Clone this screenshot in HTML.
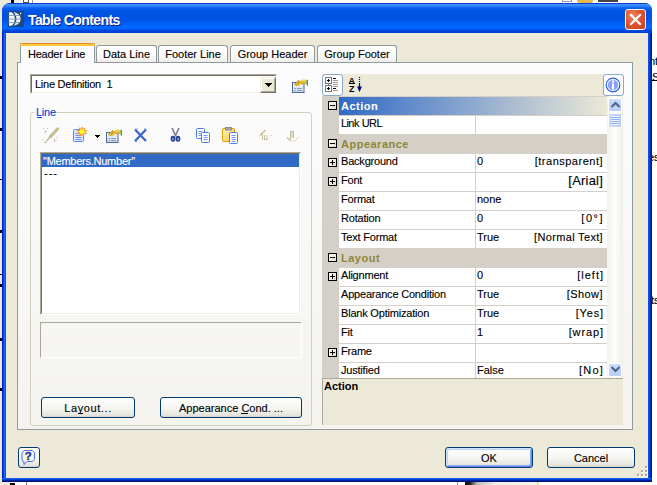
<!DOCTYPE html>
<html><head><meta charset="utf-8">
<style>
*{box-sizing:border-box}
html,body{margin:0;padding:0}
body{width:657px;height:485px;position:relative;overflow:hidden;background:#fff;font-family:"Liberation Sans",sans-serif;font-size:11px;color:#000;letter-spacing:-0.25px;-webkit-text-stroke:0.12px currentColor}
.a{position:absolute}
.t{position:absolute;white-space:pre;line-height:13px}
/* window */
#win{left:2px;top:3px;width:650px;height:479px;background:#0845e8;border-radius:8px 7px 0 0;overflow:hidden}
#frameL{left:0;top:0;width:4px;height:479px;background:linear-gradient(90deg,#0020d8 0,#0020d8 1px,#0040e8 1px,#0040e8 2px,#1c6cf8 2px,#1c6cf8 3px,#0855e0 3px)}
#frameR{right:0;top:0;width:4px;height:479px;background:linear-gradient(90deg,#0a4ef0 0,#0a4ef0 1px,#0845d8 1px,#0845d8 2px,#0028a8 2px,#0028a8 3px,#001e90 3px)}
#frameB{left:0;bottom:0;width:650px;height:4px;background:linear-gradient(180deg,#1060f0 0,#1060f0 1px,#0040d0 1px,#0040d0 2px,#0020a0 2px,#0020a0 3px,#001080 3px)}
#title{left:0;top:0;width:650px;height:30px;border-radius:8px 7px 0 0;background:linear-gradient(180deg,#0a3edc 0px,#0a3edc 1px,#3d95ff 1px,#3585ff 3px,#0a60f2 5px,#0054e3 8px,#0052e2 16px,#005ef5 20px,#0066ff 23px,#0066ff 26px,#0048dd 27px,#003dd7 30px)}
#client{left:4px;top:30px;width:642px;height:445px;background:#ece9d8}
.ttl{left:28px;top:14px;color:#fff;font-weight:bold;font-size:14px;letter-spacing:-0.6px;-webkit-text-stroke:0;text-shadow:1px 1px #0a1e8c}
/* tabs */
.tabi{position:absolute;top:45px;height:18px;border:1px solid #919b9c;border-bottom:none;border-radius:3px 3px 0 0;background:linear-gradient(180deg,#fff,#fefefe 40%,#ecebe6)}
.tabi span{position:absolute;left:0;right:0;top:2px;letter-spacing:0;text-align:center;white-space:pre;line-height:13px}
#panel{left:17px;top:62px;width:616px;height:368px;border:1px solid #919b9c;background:linear-gradient(180deg,#fcfcfe,#f4f3ee)}
.btn{position:absolute;border:1px solid #003c74;border-radius:3px;background:linear-gradient(180deg,#fff,#f3f3ef 60%,#e6e5dd 90%,#d6d0c5)}
.btn span{position:absolute;left:0;right:0;top:4px;letter-spacing:0;text-align:center;white-space:pre;line-height:13px}
/* grid */
.row{position:absolute;left:339px;width:268px;height:19px;border-top:1px solid #d4d0c8;background:#fff}
.cat{position:absolute;left:322px;width:285px;height:19px;background:#d4d0c8}
.nm{position:absolute;left:341px;white-space:pre;line-height:13px;letter-spacing:-0.2px}
.vl{position:absolute;left:477px;white-space:pre;line-height:13px;letter-spacing:0}
.vr{position:absolute;right:54px;white-space:pre;line-height:13px;letter-spacing:0.2px}
.catt{position:absolute;left:341px;white-space:pre;line-height:13px;font-weight:bold;color:#8f8737;letter-spacing:0.5px;-webkit-text-stroke:0}
.box{position:absolute;left:328px;width:9px;height:9px;border:1px solid #000;background:linear-gradient(135deg,#fff,#dcd9d0)}
.box:before{content:"";position:absolute;left:1px;top:3px;width:5px;height:1px;background:#000}
.box.p:after{content:"";position:absolute;left:3px;top:1px;width:1px;height:5px;background:#000}
</style></head>
<body>
<!-- background fragments -->
<div class="a" style="left:0;top:0;width:2px;height:485px;background:#ece9d8"></div>
<div class="a" style="left:0;top:0;width:11px;height:14px;background:#ece9d8"></div>
<div class="a" style="left:11px;top:0;width:3px;height:3px;background:#000"></div>
<div class="a" style="left:14px;top:0;width:8px;height:3px;background:#eeeeee"></div>
<div class="a" style="left:0;top:482px;width:9px;height:3px;background:#ece9d8"></div>
<div class="a" style="left:9px;top:483px;width:6px;height:2px;background:#000"></div>

<div id="win" class="a">
 <div id="title" class="a"></div>
 <div id="frameL" class="a" style="top:30px;height:449px"></div>
 <div id="frameR" class="a" style="top:30px;height:449px"></div>
 <div id="frameB" class="a"></div>
 <div id="client" class="a"></div>
</div>

<!-- title -->
<div class="t ttl">Table Contents</div>


<!-- title icon -->
<svg class="a" style="left:8px;top:11px" width="16" height="16" viewBox="0 0 16 16">
 <rect width="16" height="16" fill="#1c4a80"/>
 <path d="M1 1.2H3.5C5.8 2.5 6.8 5 6.8 8C6.8 11 5.8 13.5 3.5 14.8H1Z" fill="#f4f7fb"/>
 <path d="M5.6 1.3C9.8 2 12.6 4.6 12.6 8C12.6 11.4 9.8 14 5.6 14.7C7.6 13 8.4 10.6 8.4 8C8.4 5.4 7.6 3 5.6 1.3Z" fill="#eef3f8"/>
 <path d="M0.5 4.5H12M0.5 8H13M0.5 11.5H12" stroke="#7f97b3" stroke-width="0.9"/>
 <circle cx="12.6" cy="2.6" r="0.8" fill="#fff"/>
</svg>
<!-- close button -->
<div class="a" style="left:625px;top:9px;width:21px;height:21px;border:1px solid #fff;border-radius:3px;background:radial-gradient(circle at 35% 30%,#f08a6a 0,#e0532f 45%,#c8401e 100%)"></div>
<svg class="a" style="left:625px;top:9px" width="21" height="21" viewBox="0 0 21 21"><path d="M6 6L15 15M15 6L6 15" stroke="#fff" stroke-width="2.2" stroke-linecap="square"/></svg>

<!-- tabs -->
<div class="tabi" style="left:96px;width:61px"><span>Data Line</span></div>
<div class="tabi" style="left:158px;width:70px"><span>Footer Line</span></div>
<div class="tabi" style="left:230px;width:85px"><span>Group Header</span></div>
<div class="tabi" style="left:317px;width:80px"><span>Group Footer</span></div>
<div id="panel" class="a"></div>
<div class="a" style="left:20px;top:43px;width:75px;height:20px;border:1px solid #919b9c;border-top:none;border-bottom:none;background:#fcfcfe"></div>
<div class="a" style="left:20px;top:43px;width:75px;height:3px;border-radius:3px 3px 0 0;background:linear-gradient(180deg,#e68b2c 0,#e68b2c 33%,#ffc73c 34%)"></div>
<div class="t" style="left:28px;top:48px">Header Line</div>

<!-- combo -->
<div class="a" style="left:30px;top:74px;width:247px;height:20px;border-top:1px solid #aca899;border-left:1px solid #aca899;border-right:1px solid #fff;border-bottom:1px solid #fff;background:#fff"></div>
<div class="a" style="left:31px;top:75px;width:245px;height:18px;border-top:1px solid #716f64;border-left:1px solid #716f64;border-right:1px solid #f1efe2;border-bottom:1px solid #f1efe2"></div>
<div class="a" style="left:260px;top:77px;width:16px;height:16px;background:#ece9d8;border-top:1px solid #f1efe2;border-left:1px solid #f1efe2;border-right:1px solid #716f64;border-bottom:1px solid #716f64"></div>
<div class="a" style="left:261px;top:78px;width:14px;height:14px;border-top:1px solid #fff;border-left:1px solid #fff;border-right:1px solid #aca899;border-bottom:1px solid #aca899"></div>
<svg class="a" style="left:265px;top:83px" width="7" height="4" viewBox="0 0 7 4" shape-rendering="crispEdges"><path d="M0 0h7v1h-1v1h-1v1h-1v1h-1v-1h-1v-1h-1v-1h-1z" fill="#000"/></svg>
<div class="t" style="left:35px;top:78px">Line Definition  1</div>

<!-- group box -->
<div class="a" style="left:30px;top:112px;width:282px;height:314px;border:1px solid #d0d0bf;border-radius:3px"></div>
<div class="a" style="left:34px;top:108px;width:22px;height:10px;background:#fafaf8"></div>
<div class="t" style="left:36px;top:106px;color:#0046d5">Line</div>
<div class="a" style="left:37px;top:117px;width:5px;height:1px;background:#0046d5"></div>

<!-- listbox -->
<div class="a" style="left:40px;top:152px;width:261px;height:163px;border-top:1px solid #aca899;border-left:1px solid #aca899;border-right:1px solid #fff;border-bottom:1px solid #fff;background:#fff"></div>
<div class="a" style="left:41px;top:153px;width:259px;height:161px;border-top:1px solid #716f64;border-left:1px solid #716f64;border-right:1px solid #f1efe2;border-bottom:1px solid #f1efe2"></div>
<div class="a" style="left:42px;top:154px;width:257px;height:13px;background:#316ac5"></div>
<div class="t" style="left:43px;top:155px;color:#fff">"Members.Number"</div>
<div class="t" style="left:44px;top:167px;letter-spacing:1px">---</div>

<!-- static box -->
<div class="a" style="left:40px;top:322px;width:262px;height:36px;border-top:1px solid #aca899;border-left:1px solid #aca899;border-right:1px solid #fff;border-bottom:1px solid #fff"></div>

<!-- buttons -->
<div class="btn" style="left:41px;top:397px;width:94px;height:21px"><span style="letter-spacing:0.6px">La<u style="text-decoration:none;position:relative">y<i style="position:absolute;left:0;right:1px;top:11px;height:1px;background:#000"></i></u>out...</span></div>
<div class="btn" style="left:160px;top:397px;width:142px;height:21px"><span>Appearance <u style="text-decoration:none;position:relative">C<i style="position:absolute;left:0;right:1px;top:11px;height:1px;background:#000"></i></u>ond. ...</span></div>
<div class="btn" style="left:445px;top:447px;width:88px;height:21px;box-shadow:inset 1px 1px #cee7ff,inset -1px -1px #6982ee,inset 2px 2px #bcd4f6,inset -2px -2px #89adf4"><span>OK</span></div>
<div class="btn" style="left:547px;top:447px;width:88px;height:21px"><span>Cancel</span></div>
<div class="btn" style="left:18px;top:447px;width:22px;height:21px"></div>
<!-- property grid -->
<div class="a" style="left:322px;top:74px;width:301px;height:22px;background:#ece9d8"></div>
<div class="a" style="left:322px;top:96px;width:285px;height:282px;background:#d4d0c8;overflow:hidden">
</div>
<div class="a" style="left:339px;top:97px;width:268px;height:18px;background:linear-gradient(90deg,#316ac5,#ece9d8)"></div>
<div class="catt" style="top:100px;color:#fff">Action</div>
<div class="box m" style="top:101px"></div>
<div class="a" style="left:339px;top:116px;width:268px;height:18px;background:#fff"></div>
<div class="a" style="left:475px;top:116px;width:1px;height:18px;background:#d4d0c8"></div>
<div class="nm" style="top:117px;letter-spacing:-0.6px;word-spacing:0.5px">Link URL</div>
<div class="catt" style="top:138px">Appearance</div>
<div class="box m" style="top:139px"></div>
<div class="a" style="left:339px;top:154px;width:268px;height:18px;background:#fff"></div>
<div class="a" style="left:475px;top:154px;width:1px;height:18px;background:#d4d0c8"></div>
<div class="nm" style="top:155px">Background</div>
<div class="vl" style="top:155px">0</div>
<div class="vr" style="top:155px;letter-spacing:0.5px;right:54px">[transparent]</div>
<div class="box p" style="top:158px"></div>
<div class="a" style="left:339px;top:173px;width:268px;height:18px;background:#fff"></div>
<div class="a" style="left:475px;top:173px;width:1px;height:18px;background:#d4d0c8"></div>
<div class="nm" style="top:174px">Font</div>
<div class="vr" style="top:174px;font-size:13px;">[Arial]</div>
<div class="box p" style="top:177px"></div>
<div class="a" style="left:339px;top:192px;width:268px;height:18px;background:#fff"></div>
<div class="a" style="left:475px;top:192px;width:1px;height:18px;background:#d4d0c8"></div>
<div class="nm" style="top:193px">Format</div>
<div class="vl" style="top:193px">none</div>
<div class="a" style="left:339px;top:211px;width:268px;height:18px;background:#fff"></div>
<div class="a" style="left:475px;top:211px;width:1px;height:18px;background:#d4d0c8"></div>
<div class="nm" style="top:212px">Rotation</div>
<div class="vl" style="top:212px">0</div>
<div class="vr" style="top:212px;letter-spacing:1.5px;right:53px">[0°]</div>
<div class="a" style="left:339px;top:230px;width:268px;height:18px;background:#fff"></div>
<div class="a" style="left:475px;top:230px;width:1px;height:18px;background:#d4d0c8"></div>
<div class="nm" style="top:231px">Text Format</div>
<div class="vl" style="top:231px">True</div>
<div class="vr" style="top:231px;letter-spacing:0.33px;right:54px">[Normal Text]</div>
<div class="catt" style="top:252px">Layout</div>
<div class="box m" style="top:253px"></div>
<div class="a" style="left:339px;top:268px;width:268px;height:18px;background:#fff"></div>
<div class="a" style="left:475px;top:268px;width:1px;height:18px;background:#d4d0c8"></div>
<div class="nm" style="top:269px">Alignment</div>
<div class="vl" style="top:269px">0</div>
<div class="vr" style="top:269px;letter-spacing:1.0px;right:53px">[left]</div>
<div class="box p" style="top:272px"></div>
<div class="a" style="left:339px;top:287px;width:268px;height:18px;background:#fff"></div>
<div class="a" style="left:475px;top:287px;width:1px;height:18px;background:#d4d0c8"></div>
<div class="nm" style="top:288px">Appearance Condition</div>
<div class="vl" style="top:288px">True</div>
<div class="vr" style="top:288px;letter-spacing:0.45px;right:54px">[Show]</div>
<div class="a" style="left:339px;top:306px;width:268px;height:18px;background:#fff"></div>
<div class="a" style="left:475px;top:306px;width:1px;height:18px;background:#d4d0c8"></div>
<div class="nm" style="top:307px">Blank Optimization</div>
<div class="vl" style="top:307px">True</div>
<div class="vr" style="top:307px;letter-spacing:0.85px;right:53px">[Yes]</div>
<div class="a" style="left:339px;top:325px;width:268px;height:18px;background:#fff"></div>
<div class="a" style="left:475px;top:325px;width:1px;height:18px;background:#d4d0c8"></div>
<div class="nm" style="top:326px">Fit</div>
<div class="vl" style="top:326px">1</div>
<div class="vr" style="top:326px;letter-spacing:0.9px;right:53px">[wrap]</div>
<div class="a" style="left:339px;top:344px;width:268px;height:18px;background:#fff"></div>
<div class="a" style="left:475px;top:344px;width:1px;height:18px;background:#d4d0c8"></div>
<div class="nm" style="top:345px">Frame</div>
<div class="box p" style="top:348px"></div>
<div class="a" style="left:339px;top:363px;width:268px;height:15px;background:#fff"></div>
<div class="a" style="left:475px;top:363px;width:1px;height:15px;background:#d4d0c8"></div>
<div class="nm" style="top:364px">Justified</div>
<div class="vl" style="top:364px">False</div>
<div class="vr" style="top:364px;letter-spacing:1.2px;right:53px">[No]</div>
<!-- scrollbar -->
<div class="a" style="left:607px;top:96px;width:16px;height:282px;background:linear-gradient(90deg,#f3f1ec,#fefefb 50%,#f0efe8)"></div>
<div class="a" style="left:608px;top:98px;width:14px;height:14px;border:1px solid #fff;border-radius:2px;background:linear-gradient(180deg,#cddcfc,#b8cdf9)"></div>
<svg class="a" style="left:610px;top:101px" width="11" height="7" viewBox="0 0 11 7"><path d="M1.5 6L5.5 2L9.5 6" stroke="#4d6185" stroke-width="2" fill="none"/></svg>
<div class="a" style="left:608px;top:113px;width:14px;height:15px;border:1px solid #fff;border-radius:2px;background:linear-gradient(90deg,#c9d8fc,#b8cdf9)"></div>
<div class="a" style="left:611px;top:116px;width:8px;height:9px;background:repeating-linear-gradient(180deg,#eef4fe 0,#eef4fe 1px,#8cb0f8 1px,#8cb0f8 2px)"></div>
<div class="a" style="left:608px;top:363px;width:14px;height:14px;border:1px solid #fff;border-radius:2px;background:linear-gradient(180deg,#cddcfc,#b8cdf9)"></div>
<svg class="a" style="left:610px;top:366px" width="11" height="7" viewBox="0 0 11 7"><path d="M1.5 1L5.5 5L9.5 1" stroke="#4d6185" stroke-width="2" fill="none"/></svg>
<!-- description -->
<div class="a" style="left:322px;top:378px;width:301px;height:47px;background:#ece9d8;border-left:1px solid #aca899;border-top:1px solid #aca899"></div>
<div class="t" style="left:324px;top:380px;font-weight:bold;letter-spacing:0;-webkit-text-stroke:0">Action</div>
<!-- toolbar buttons -->
<div class="a" style="left:322px;top:74px;width:21px;height:22px;border:1px solid #8da8cf;border-radius:3px;background:#fff"></div>
<div class="a" style="left:603px;top:74px;width:21px;height:22px;border:1px solid #8da8cf;border-radius:3px;background:#fff"></div>

<!-- properties icon template used twice -->
<svg class="a" style="left:288px;top:74px" width="24" height="24" viewBox="0 0 24 24">
 <defs><linearGradient id="pbx" x1="0" y1="0" x2="0" y2="1"><stop offset="0" stop-color="#f4f7fc"/><stop offset="1" stop-color="#c9d9f1"/></linearGradient>
 <linearGradient id="hnd" x1="0" y1="0" x2="0" y2="1"><stop offset="0" stop-color="#fbe27a"/><stop offset="1" stop-color="#d19a10"/></linearGradient></defs>
 <rect x="4.5" y="8.5" width="11.5" height="10" fill="url(#pbx)" stroke="#4d6a96"/>
 <path d="M6.5 14.5h1.5M9 14.5h5M6.5 16.5h1.5M9 16.5h5" stroke="#8a9bbb"/>
 <path d="M6 11L11 6L14 9L11 12Z" fill="#e9c63a"/>
 <path d="M6 11L11 6M8 12L12.5 7.5M7 10.5l1 1M9 8.5l1.5 1.5M10.5 7l1.5 1.5" stroke="#a98818" stroke-width="0.8"/>
 <ellipse cx="15.5" cy="7.8" rx="3.2" ry="2.6" fill="url(#hnd)"/>
 <path d="M18.5 5.5L20 6V12L18.5 11Z" fill="#4aa040"/>
</svg>
<!-- toolbar: wand disabled -->
<svg class="a" style="left:42px;top:127px" width="18" height="17" viewBox="0 0 18 17">
 <path d="M15.5 2L8.5 9.5" stroke="#c5bd98" stroke-width="3.2" stroke-linecap="round"/>
 <path d="M8 10L4.5 14" stroke="#c5bd98" stroke-width="1.6"/>
 <path d="M1 1.5h1M5 1.5h1M3 4.5h2M3 4.5v2M0.5 12.5h1M3 15.5h2M3 14v2M12.5 13h2M12.5 13v2M14.5 10.5h1" stroke="#c5bd98" stroke-width="1"/>
</svg>
<!-- new doc with star -->
<svg class="a" style="left:72px;top:126px" width="16" height="17" viewBox="0 0 16 17">
 <rect x="1.5" y="3.5" width="10" height="12" rx="1" fill="#dde7fb" stroke="#5b86e6"/>
 <path d="M3.5 7.5h5M3.5 9.5h6M3.5 11.5h6M3.5 13.5h6" stroke="#6f95ea"/>
 <path d="M10 1L10.9 3.3L13 1.8L12.4 4.3L15 4.6L12.8 6L14.5 8L11.9 7.6L11.5 10L10 8L8.5 10L8.1 7.6L5.5 8L7.2 6L5 4.6L7.6 4.3L7 1.8L9.1 3.3Z" fill="#fff200" stroke="#f05a28" stroke-width="0.5"/>
 <circle cx="10" cy="5.5" r="1.6" fill="#fff860"/>
</svg>
<svg class="a" style="left:95px;top:135px" width="5" height="3" viewBox="0 0 5 3" shape-rendering="crispEdges"><path d="M0 0h5v1h-1v1h-1v1h-1v-1h-1v-1h-1z" fill="#000"/></svg>
<!-- properties in toolbar -->
<svg class="a" style="left:102px;top:124px" width="24" height="24" viewBox="0 0 24 24">
 <rect x="4.5" y="8.5" width="11.5" height="10" fill="url(#pbx)" stroke="#4d6a96"/>
 <path d="M6.5 14.5h1.5M9 14.5h5M6.5 16.5h1.5M9 16.5h5" stroke="#8a9bbb"/>
 <path d="M6 11L11 6L14 9L11 12Z" fill="#e9c63a"/>
 <path d="M6 11L11 6M8 12L12.5 7.5M7 10.5l1 1M9 8.5l1.5 1.5M10.5 7l1.5 1.5" stroke="#a98818" stroke-width="0.8"/>
 <ellipse cx="15.5" cy="7.8" rx="3.2" ry="2.6" fill="url(#hnd)"/>
 <path d="M18.5 5.5L20 6V12L18.5 11Z" fill="#4aa040"/>
</svg>
<!-- delete X -->
<svg class="a" style="left:133px;top:128px" width="15" height="15" viewBox="0 0 15 15">
 <path d="M2 1.5L13 13M13 1.5L2 13" stroke="#3b63cf" stroke-width="2.2"/>
 <path d="M2.5 1L4.5 1M11 1h2M2 13.5h2" stroke="#6c8fe0" stroke-width="1"/>
</svg>
<!-- scissors -->
<svg class="a" style="left:169px;top:127px" width="13" height="16" viewBox="0 0 13 16">
 <path d="M3 1L7 9.5M10 1L6 9.5" stroke="#7d8290" stroke-width="1.7"/>
 <ellipse cx="4" cy="11.8" rx="2.4" ry="3" fill="#24428f"/>
 <ellipse cx="9" cy="11.8" rx="2.4" ry="3" fill="#24428f"/>
 <ellipse cx="3.8" cy="12" rx="0.9" ry="1.3" fill="#8aa4e8"/>
 <ellipse cx="9.2" cy="12" rx="0.9" ry="1.3" fill="#8aa4e8"/>
</svg>
<!-- copy -->
<svg class="a" style="left:195px;top:127px" width="16" height="16" viewBox="0 0 16 16">
 <rect x="1.5" y="1.5" width="8" height="10" rx="1" fill="#fff" stroke="#4f7be8"/>
 <path d="M3.5 4.5h4M3.5 6.5h4M3.5 8.5h4" stroke="#6f95ea"/>
 <rect x="6.5" y="5.5" width="8" height="10" rx="1" fill="#fff" stroke="#4f7be8"/>
 <path d="M8.5 8.5h4M8.5 10.5h4M8.5 12.5h4" stroke="#6f95ea"/>
</svg>
<!-- paste -->
<svg class="a" style="left:221px;top:127px" width="18" height="17" viewBox="0 0 18 17">
 <defs><linearGradient id="clp" x1="0" y1="0" x2="1" y2="1"><stop offset="0" stop-color="#fff6c8"/><stop offset="1" stop-color="#f2c23c"/></linearGradient></defs>
 <rect x="1.5" y="1.5" width="12" height="13" rx="1.5" fill="url(#clp)" stroke="#e0a000"/>
 <rect x="4.5" y="0.5" width="6" height="2.5" fill="#a9a9a9" stroke="#808080" stroke-width="0.8"/>
 <rect x="8.5" y="5.5" width="8" height="11" rx="1" fill="#fff" stroke="#4f7be8"/>
 <path d="M10.5 8.5h4M10.5 10.5h4M10.5 12.5h4M10.5 14.5h4" stroke="#6f95ea"/>
</svg>
<!-- up disabled -->
<svg class="a" style="left:259px;top:129px" width="14" height="13" viewBox="0 0 14 13">
 <path d="M1 6.5L6.5 1" stroke="#c5bd98" stroke-width="1.5"/>
 <path d="M3.5 5v6M5.5 6v5M5.5 10.5h3M8 6v5M11.5 6.5h1" stroke="#c5bd98" stroke-width="1"/>
</svg>
<!-- down disabled -->
<svg class="a" style="left:286px;top:129px" width="14" height="14" viewBox="0 0 14 14">
 <path d="M4 2.5h4M4.5 2v8M7.5 2v7M6 3v6" stroke="#c5bd98" stroke-width="1"/>
 <path d="M1 8.5L5 12" stroke="#c5bd98" stroke-width="1.4"/>
 <path d="M6.5 12.5h1M8.5 11.5h1M10 10h1M11.5 8.5h1" stroke="#c5bd98" stroke-width="1"/>
</svg>
<!-- grid toolbar icons -->
<svg class="a" style="left:323px;top:75px" width="20" height="20" viewBox="0 0 20 20" shape-rendering="crispEdges">
 <rect x="2.5" y="2.5" width="6" height="6" fill="#fff" stroke="#7a7a7a"/>
 <rect x="2.5" y="10.5" width="6" height="6" fill="#fff" stroke="#7a7a7a"/>
 <path d="M5.5 8.5v2" stroke="#7a7a7a"/>
 <path d="M4 5.5h3M5.5 4v3M4 13.5h3M5.5 12v3" stroke="#000"/>
 <path d="M10 3.5h3M10 5.5h5M10 7.5h5M10 9.5h5M10 11.5h5M10 13.5h3M10 15.5h5" stroke="#9a9a9a"/>
 <path d="M10 3.5h3M10 13.5h3" stroke="#000"/>
</svg>
<svg class="a" style="left:347px;top:76px" width="17" height="18" viewBox="0 0 17 18">
 <text x="1.5" y="7.6" font-family="Liberation Sans" font-weight="bold" font-size="9" fill="#000">A</text>
 <path d="M2 7.5h6" stroke="#000" stroke-width="1"/>
 <text x="2" y="16" font-family="Liberation Sans" font-weight="bold" font-size="9" fill="#000">Z</text>
 <path d="M12.5 1v1M12.5 3v1M12.5 5v1M12.5 7v4" stroke="#000080" stroke-width="1.2"/>
 <path d="M10 10.5h5L12.5 16Z" fill="#000080"/>
</svg>
<svg class="a" style="left:603px;top:74px" width="21" height="22" viewBox="0 0 21 22">
 <circle cx="10" cy="11" r="6.8" fill="#fff" stroke="#2d5cf2" stroke-width="1.2"/>
 <circle cx="10" cy="11" r="5.2" fill="#87a3f6"/>
 <rect x="9" y="6.5" width="2" height="2" fill="#fff"/>
 <rect x="9" y="9.5" width="2" height="6" fill="#fff"/>
</svg>
<!-- help icon -->
<svg class="a" style="left:18px;top:447px" width="22" height="21" viewBox="0 0 22 21">
 <path d="M6.5 3.5h8l2 2v7l-2 2h-5l-3.5 3v-3h-1l-1-2v-7z" fill="#f6f4e0" stroke="#4a70f0" stroke-width="1"/>
 <text x="6.8" y="13.4" font-family="Liberation Sans" font-weight="bold" font-size="11.5" fill="#1b2f9c" stroke="#1b2f9c" stroke-width="0.3">?</text>
</svg>

<!-- size grip -->
<div class="a" style="left:645px;top:466px;width:2px;height:2px;background:#aca899;box-shadow:1px 1px #fff"></div>
<div class="a" style="left:641px;top:470px;width:2px;height:2px;background:#aca899;box-shadow:1px 1px #fff"></div>
<div class="a" style="left:645px;top:470px;width:2px;height:2px;background:#aca899;box-shadow:1px 1px #fff"></div>
<div class="a" style="left:637px;top:474px;width:2px;height:2px;background:#aca899;box-shadow:1px 1px #fff"></div>
<div class="a" style="left:641px;top:474px;width:2px;height:2px;background:#aca899;box-shadow:1px 1px #fff"></div>
<div class="a" style="left:645px;top:474px;width:2px;height:2px;background:#aca899;box-shadow:1px 1px #fff"></div>
<!-- right-edge fragments -->
<div class="a" style="left:652px;top:0;width:5px;height:485px;overflow:hidden">
 <div class="t" style="left:-3px;top:55px;letter-spacing:0">nt</div>
 <div class="t" style="left:0px;top:71px;letter-spacing:0">S</div>
 <div class="a" style="left:0;top:80px;width:5px;height:1px;background:#000"></div>
 <div class="t" style="left:-4px;top:151px;letter-spacing:0">es</div>
 <div class="t" style="left:-1px;top:294px;letter-spacing:0">ts</div>
</div>
<div class="a" style="left:457px;top:482px;width:1px;height:3px;background:#999"></div>
<div class="a" style="left:465px;top:482px;width:72px;height:3px;background:linear-gradient(90deg,#111 0,#222 5px,#bbb 12px,#eee 30px,#f4f4f0 100%)"></div>
<div class="a" style="left:537px;top:482px;width:2px;height:3px;background:#e8e0b8"></div>
<!-- left marks -->
<div class="a" style="left:0;top:76px;width:2px;height:3px;background:#000"></div>
<div class="a" style="left:0;top:128px;width:2px;height:3px;background:#000"></div>
<div class="a" style="left:0;top:179px;width:2px;height:1px;background:#000"></div>
<div class="a" style="left:0;top:230px;width:2px;height:3px;background:#000"></div>
<div class="a" style="left:0;top:274px;width:2px;height:1px;background:#000"></div>
<div class="a" style="left:0;top:284px;width:2px;height:3px;background:#000"></div>
<div class="a" style="left:0;top:338px;width:2px;height:3px;background:#000"></div>
<div class="a" style="left:0;top:388px;width:2px;height:3px;background:#000"></div>
<!-- top fragments -->
<div class="a" style="left:23px;top:0;width:6px;height:3px;border:1px solid #555;border-top:none"></div>
<div class="a" style="left:32px;top:0;width:1px;height:3px;background:#999"></div>
<div class="a" style="left:562px;top:0;width:10px;height:2px;border:1px solid #999;border-top:none"></div>
<div class="a" style="left:577px;top:0;width:16px;height:3px;background:#e8b84a;border-radius:0 0 2px 2px"></div>
<div class="a" style="left:598px;top:0;width:20px;height:2px;background:#444"></div>
<div class="a" style="left:9px;top:482px;width:1px;height:3px;background:#ece9d8"></div>
<div class="a" style="left:26px;top:482px;width:1px;height:3px;background:#888"></div>
</body></html>
